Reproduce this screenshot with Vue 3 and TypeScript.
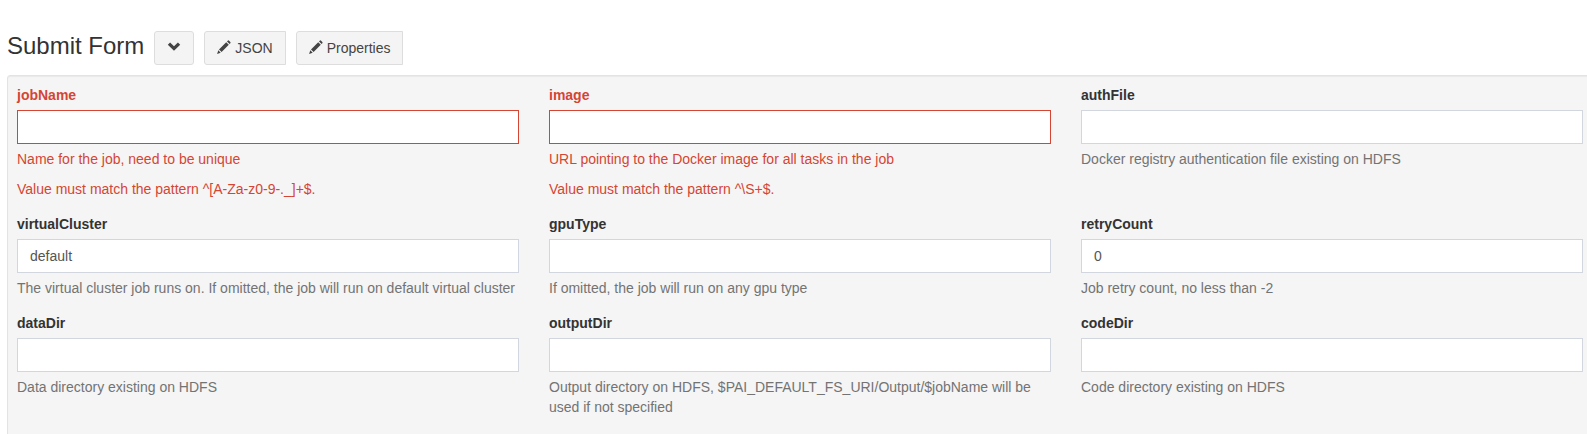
<script setup lang="ts">
interface Field {
  name: string
  value: string
  help: string
  error?: string
}

const fields: Field[] = [
  { name: 'jobName', value: '', help: 'Name for the job, need to be unique', error: 'Value must match the pattern ^[A-Za-z0-9-._]+$.' },
  { name: 'image', value: '', help: 'URL pointing to the Docker image for all tasks in the job', error: 'Value must match the pattern ^\\S+$.' },
  { name: 'authFile', value: '', help: 'Docker registry authentication file existing on HDFS' },
  { name: 'virtualCluster', value: 'default', help: 'The virtual cluster job runs on. If omitted, the job will run on default virtual cluster' },
  { name: 'gpuType', value: '', help: 'If omitted, the job will run on any gpu type' },
  { name: 'retryCount', value: '0', help: 'Job retry count, no less than -2' },
  { name: 'dataDir', value: '', help: 'Data directory existing on HDFS' },
  { name: 'outputDir', value: '', help: 'Output directory on HDFS, $PAI_DEFAULT_FS_URI/Output/$jobName will be used if not specified' },
  { name: 'codeDir', value: '', help: 'Code directory existing on HDFS' },
]

const editors: string[] = ['JSON', 'Properties']
</script>

<template>
  <main class="page">
    <header class="head">
      <h3 class="title">Submit Form</h3>
      <button class="btn" type="button" aria-label="Collapse">
        <svg class="icon" viewBox="0 0 14 14"><path d="M3.1 2.5 7 6.2l3.9-3.7 2.3 2.2L7 10.7.8 4.7z" /></svg>
      </button>
      <button v-for="name in editors" :key="name" class="btn edit" type="button">
        <svg class="icon" viewBox="0 0 14 14"><path d="M.1 13.9l1.2-3.6 2.4 2.4zM2 9.4 9.2 2.2l2.6 2.6L4.6 12zM10 1.4l.7-.7q.7-.7 1.4 0l1.2 1.2q.7.7 0 1.4l-.7.7z" /></svg>
        <span>{{ name }}</span>
      </button>
    </header>
    <form class="well">
      <div v-for="f in fields" :key="f.name" class="field" :class="{ invalid: f.error }">
        <label class="label" :for="f.name">{{ f.name }}</label>
        <input :id="f.name" class="input" type="text" :value="f.value" />
        <p class="help">{{ f.help }}</p>
        <p v-if="f.error" class="help">{{ f.error }}</p>
      </div>
    </form>
  </main>
</template>

<style>
body {
  margin: 0;
  overflow: hidden;
  background: #fff;
}
</style>

<style scoped>
.page {
  box-sizing: border-box;
  height: 434px;
  padding: 31px 0 0 7px;
  overflow: hidden;
  font: 14px/20px "Liberation Sans", Arial, sans-serif;
  color: #333;
}
.head {
  display: flex;
  gap: 10px;
  height: 44px;
}
.title {
  margin: 0;
  font-size: 24px;
  font-weight: 400;
  line-height: 30px;
}
.btn {
  box-sizing: border-box;
  display: flex;
  align-items: center;
  gap: 4px;
  height: 34px;
  padding: 0 12px;
  border: 1px solid #ddd;
  border-radius: 3px;
  background: #f4f4f4;
  color: #444;
  font: inherit;
}
.edit {
  border-top-right-radius: 0;
  border-bottom-right-radius: 0;
}
.edit:last-child {
  padding-right: 11px;
}
.icon {
  width: 14px;
  height: 14px;
  margin-bottom: 2px;
  fill: #444;
}
.well {
  box-sizing: border-box;
  display: grid;
  grid-template-columns: repeat(3, 502px);
  grid-template-rows: 129px 99px 119px;
  column-gap: 30px;
  width: 1590px;
  height: 380px;
  padding: 9px;
  border: 1px solid #e3e3e3;
  border-radius: 3px;
  background: #f5f5f5;
  box-shadow: inset 0 1px 1px rgba(0, 0, 0, 0.05);
}
.label {
  display: block;
  margin-bottom: 5px;
  font-weight: 700;
  color: #333;
}
.input {
  box-sizing: border-box;
  display: block;
  width: 100%;
  height: 34px;
  padding: 6px 12px;
  border: 1px solid #d2d6de;
  border-radius: 0;
  background: #fff;
  color: #555;
  font: inherit;
}
.help {
  margin: 5px 0 10px;
  color: #737373;
}
.invalid .label,
.invalid .help {
  color: #d44534;
}
.invalid .input {
  border-color: #d44534;
}
</style>
